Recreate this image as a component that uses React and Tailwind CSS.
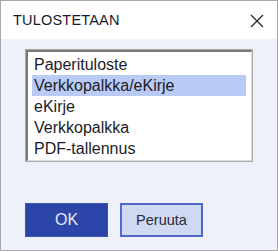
export default function App() {
  const items = ["Paperituloste", "Verkkopalkka/eKirje", "eKirje", "Verkkopalkka", "PDF-tallennus"];
  return (
    <div className="w-[278px] h-[252px] bg-white" style={{ fontFamily: '"Liberation Sans", Arial, sans-serif' }}>
      <div className="w-[278px] h-[251px] border border-[#a8a8a8] flex flex-col">
        <div className="h-[38px] bg-white flex items-center justify-between pl-[12px] pr-[13px]">
          <span className="text-[14.5px] text-[#1a1a2e] tracking-[0.2px] leading-none">TULOSTETAAN</span>
          <svg width="14" height="14" viewBox="0 0 14 14" className="mt-[1px]">
            <path d="M1 1 L13 13 M13 1 L1 13" stroke="#2a2a2a" strokeWidth="1.3" fill="none" />
          </svg>
        </div>
        <div className="flex-1 bg-[#eef1fa] pl-[24px] pt-[10px] flex flex-col">
          <div className="w-[228px] h-[113px] border border-[#a9a9a9] bg-white">
            <div className="w-full h-full border-t-2 border-l-2 border-b border-r border-t-[#7a7a7a] border-l-[#7a7a7a] border-b-[#dcdcdc] border-r-[#dcdcdc] pt-[2px]">
              {items.map((t, i) => (
                <div
                  key={t}
                  className={
                    i === 1
                      ? "ml-[4px] mr-[5px] h-[21px] flex items-center pl-[2px] bg-[#b9cbf5] text-[16px] text-[#1c1c28] leading-none"
                      : "ml-[4px] mr-[5px] h-[21px] flex items-center pl-[2px] text-[16px] text-[#1c1c28] leading-none"
                  }
                >
                  {t}
                </div>
              ))}
            </div>
          </div>
          <div className="flex gap-[12px] mt-[41px]">
            <div className="w-[83px] h-[34px] bg-[#2c45a8] border border-[#3a54b8] flex items-center justify-center text-[16px] text-[#e4eafa] leading-none">
              OK
            </div>
            <div className="w-[83px] h-[34px] bg-[#cfdaf2] border-2 border-[#5069c9] flex items-center justify-center text-[14.5px] text-[#2a2a3a] leading-none">
              Peruuta
            </div>
          </div>
        </div>
      </div>
    </div>
  );
}
